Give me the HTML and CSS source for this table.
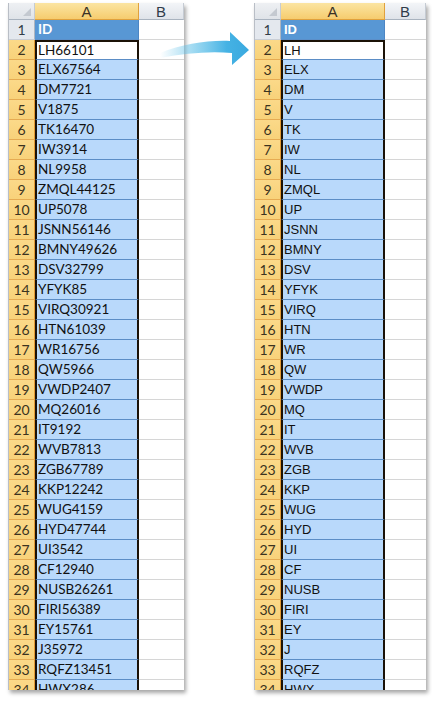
FILE: index.html
```html
<!DOCTYPE html>
<html>
<head>
<meta charset="utf-8">
<link rel="stylesheet" href="styles.css">
</head>
<body>
<div class="page">
  <div class="sheet sheet-left">
    <div class="ch corner"><span class="tri"></span></div><div class="ch ch-sel">A</div><div class="ch">B</div>
    <div class="rh">1</div><div class="c id">ID</div><div class="c b"></div>
    <div class="rh sel">2</div><div class="c a active first">LH66101</div><div class="c b"></div>
    <div class="rh sel">3</div><div class="c a">ELX67564</div><div class="c b"></div>
    <div class="rh sel">4</div><div class="c a">DM7721</div><div class="c b"></div>
    <div class="rh sel">5</div><div class="c a">V1875</div><div class="c b"></div>
    <div class="rh sel">6</div><div class="c a">TK16470</div><div class="c b"></div>
    <div class="rh sel">7</div><div class="c a">IW3914</div><div class="c b"></div>
    <div class="rh sel">8</div><div class="c a">NL9958</div><div class="c b"></div>
    <div class="rh sel">9</div><div class="c a">ZMQL44125</div><div class="c b"></div>
    <div class="rh sel">10</div><div class="c a">UP5078</div><div class="c b"></div>
    <div class="rh sel">11</div><div class="c a">JSNN56146</div><div class="c b"></div>
    <div class="rh sel">12</div><div class="c a">BMNY49626</div><div class="c b"></div>
    <div class="rh sel">13</div><div class="c a">DSV32799</div><div class="c b"></div>
    <div class="rh sel">14</div><div class="c a">YFYK85</div><div class="c b"></div>
    <div class="rh sel">15</div><div class="c a">VIRQ30921</div><div class="c b"></div>
    <div class="rh sel">16</div><div class="c a">HTN61039</div><div class="c b"></div>
    <div class="rh sel">17</div><div class="c a">WR16756</div><div class="c b"></div>
    <div class="rh sel">18</div><div class="c a">QW5966</div><div class="c b"></div>
    <div class="rh sel">19</div><div class="c a">VWDP2407</div><div class="c b"></div>
    <div class="rh sel">20</div><div class="c a">MQ26016</div><div class="c b"></div>
    <div class="rh sel">21</div><div class="c a">IT9192</div><div class="c b"></div>
    <div class="rh sel">22</div><div class="c a">WVB7813</div><div class="c b"></div>
    <div class="rh sel">23</div><div class="c a">ZGB67789</div><div class="c b"></div>
    <div class="rh sel">24</div><div class="c a">KKP12242</div><div class="c b"></div>
    <div class="rh sel">25</div><div class="c a">WUG4159</div><div class="c b"></div>
    <div class="rh sel">26</div><div class="c a">HYD47744</div><div class="c b"></div>
    <div class="rh sel">27</div><div class="c a">UI3542</div><div class="c b"></div>
    <div class="rh sel">28</div><div class="c a">CF12940</div><div class="c b"></div>
    <div class="rh sel">29</div><div class="c a">NUSB26261</div><div class="c b"></div>
    <div class="rh sel">30</div><div class="c a">FIRI56389</div><div class="c b"></div>
    <div class="rh sel">31</div><div class="c a">EY15761</div><div class="c b"></div>
    <div class="rh sel">32</div><div class="c a">J35972</div><div class="c b"></div>
    <div class="rh sel">33</div><div class="c a">RQFZ13451</div><div class="c b"></div>
    <div class="rh sel">34</div><div class="c a">HWX286</div><div class="c b"></div>
  </div>

  <div class="sheet sheet-right">
    <div class="ch corner"><span class="tri"></span></div><div class="ch ch-sel">A</div><div class="ch">B</div>
    <div class="rh">1</div><div class="c id">ID</div><div class="c b"></div>
    <div class="rh sel">2</div><div class="c a active first">LH</div><div class="c b"></div>
    <div class="rh sel">3</div><div class="c a">ELX</div><div class="c b"></div>
    <div class="rh sel">4</div><div class="c a">DM</div><div class="c b"></div>
    <div class="rh sel">5</div><div class="c a">V</div><div class="c b"></div>
    <div class="rh sel">6</div><div class="c a">TK</div><div class="c b"></div>
    <div class="rh sel">7</div><div class="c a">IW</div><div class="c b"></div>
    <div class="rh sel">8</div><div class="c a">NL</div><div class="c b"></div>
    <div class="rh sel">9</div><div class="c a">ZMQL</div><div class="c b"></div>
    <div class="rh sel">10</div><div class="c a">UP</div><div class="c b"></div>
    <div class="rh sel">11</div><div class="c a">JSNN</div><div class="c b"></div>
    <div class="rh sel">12</div><div class="c a">BMNY</div><div class="c b"></div>
    <div class="rh sel">13</div><div class="c a">DSV</div><div class="c b"></div>
    <div class="rh sel">14</div><div class="c a">YFYK</div><div class="c b"></div>
    <div class="rh sel">15</div><div class="c a">VIRQ</div><div class="c b"></div>
    <div class="rh sel">16</div><div class="c a">HTN</div><div class="c b"></div>
    <div class="rh sel">17</div><div class="c a">WR</div><div class="c b"></div>
    <div class="rh sel">18</div><div class="c a">QW</div><div class="c b"></div>
    <div class="rh sel">19</div><div class="c a">VWDP</div><div class="c b"></div>
    <div class="rh sel">20</div><div class="c a">MQ</div><div class="c b"></div>
    <div class="rh sel">21</div><div class="c a">IT</div><div class="c b"></div>
    <div class="rh sel">22</div><div class="c a">WVB</div><div class="c b"></div>
    <div class="rh sel">23</div><div class="c a">ZGB</div><div class="c b"></div>
    <div class="rh sel">24</div><div class="c a">KKP</div><div class="c b"></div>
    <div class="rh sel">25</div><div class="c a">WUG</div><div class="c b"></div>
    <div class="rh sel">26</div><div class="c a">HYD</div><div class="c b"></div>
    <div class="rh sel">27</div><div class="c a">UI</div><div class="c b"></div>
    <div class="rh sel">28</div><div class="c a">CF</div><div class="c b"></div>
    <div class="rh sel">29</div><div class="c a">NUSB</div><div class="c b"></div>
    <div class="rh sel">30</div><div class="c a">FIRI</div><div class="c b"></div>
    <div class="rh sel">31</div><div class="c a">EY</div><div class="c b"></div>
    <div class="rh sel">32</div><div class="c a">J</div><div class="c b"></div>
    <div class="rh sel">33</div><div class="c a">RQFZ</div><div class="c b"></div>
    <div class="rh sel">34</div><div class="c a">HWX</div><div class="c b"></div>
  </div>

  <svg class="arrow" width="100" height="50" viewBox="0 0 100 50">
    <defs>
      <linearGradient id="ag" x1="0" y1="0" x2="1" y2="0">
        <stop offset="0" stop-color="#5bbfe8" stop-opacity="0"/>
        <stop offset="0.35" stop-color="#5bbfe8" stop-opacity="0.55"/>
        <stop offset="0.75" stop-color="#45b2e4" stop-opacity="1"/>
        <stop offset="1" stop-color="#3aa9df" stop-opacity="1"/>
      </linearGradient>
    </defs>
    <path d="M2 33 C 25 24, 50 20, 72 21 L 72 12 L 91 30 L 74 45 L 74 33 C 52 31, 28 33, 2 38 Z" fill="url(#ag)"/>
  </svg>
</div>
</body>
</html>
```

FILE: styles.css
```css
html, body {
  margin: 0;
  padding: 0;
  background: #ffffff;
}

.page {
  position: relative;
  display: flex;
  gap: 70px;
  padding: 3px 0 0 8px;
  width: 432px;
  height: 702px;
  box-sizing: border-box;
}

.sheet {
  display: grid;
  grid-template-rows: 17px;
  grid-auto-rows: 20px;
  height: 687px;
  overflow: hidden;
  background: #ffffff;
  box-shadow: 2px 3px 4px rgba(0, 0, 0, 0.35);
  border-left: 1px solid #b9bec6;
  box-sizing: border-box;
}

.sheet-left {
  grid-template-columns: 26px 104px 45px;
}

.sheet-right {
  grid-template-columns: 26px 104px 41px;
}

.ch {
  position: relative;
  box-sizing: border-box;
  background: linear-gradient(#f3f5f8, #dfe3e9);
  border-right: 1px solid #c5cbd3;
  border-bottom: 1px solid #a9b3bf;
  font-family: "Liberation Sans", Arial, sans-serif;
  font-size: 15px;
  color: #2f3b4a;
  text-align: center;
  line-height: 17px;
}

.ch-sel {
  background: linear-gradient(#fbe5a3, #f6cc6e);
  border-right: 1px solid #e0a13d;
  border-bottom: 1px solid #e0a13d;
  color: #3a3226;
}

.corner {
  background: linear-gradient(#eef0f3, #dfe3e8);
}

.tri {
  position: absolute;
  right: 3px;
  bottom: 3px;
  width: 0;
  height: 0;
  border-left: 8px solid transparent;
  border-bottom: 8px solid #c4c9d0;
}

.rh {
  box-sizing: border-box;
  background: #e4e8ee;
  border-right: 1px solid #aeb6c1;
  border-bottom: 1px solid #c9ced6;
  font-family: Lato, "Open Sans", sans-serif;
  font-size: 14px;
  color: #333d48;
  text-align: center;
  line-height: 19px;
}

.rh.sel {
  background: linear-gradient(#fbd989, #f8d27a);
  border-right: 1px solid #e39a32;
  border-bottom: 1px solid #e6ab52;
  color: #3b3320;
}

.c {
  box-sizing: border-box;
  border-bottom: 1px solid #d6d6d6;
  padding-left: 3px;
  line-height: 19px;
  font-size: 14px;
  color: #111111;
  white-space: nowrap;
  overflow: hidden;
}

.sheet-left .c {
  font-family: Lato, "Open Sans", sans-serif;
  font-size: 13.5px;
}

.sheet-right .c {
  font-family: "Liberation Sans", Arial, sans-serif;
  font-size: 13px;
}

.c.id {
  background: #5897d4;
  color: #ffffff;
  font-weight: bold;
  border-bottom: 1px solid #5b8fc9;
  border-right: 1px solid #4d86c4;
}

.c.a {
  background: #b9d9fb;
  border-left: 2px solid #1b1207;
  border-right: 2px solid #1b1207;
  border-bottom: 1px solid #5b8dc6;
  padding-left: 1px;
  box-shadow: 1px 0 0 #a0662a;
}

.c.a.first {
  border-top: 2px solid #1b1207;
  line-height: 17px;
}

.c.a.active {
  background: #ffffff;
}

.c.b {
  background: #ffffff;
}

.arrow {
  position: absolute;
  left: 158px;
  top: 20px;
}
```
